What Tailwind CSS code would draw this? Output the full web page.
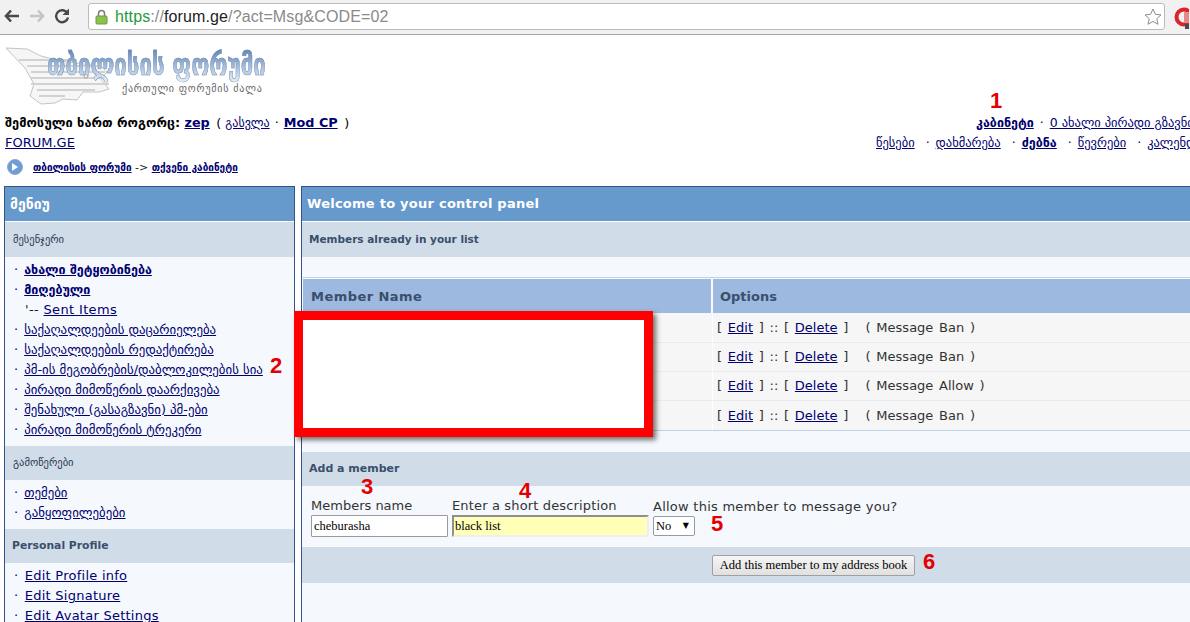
<!DOCTYPE html>
<html lang="en">
<head>
    <meta charset="UTF-8" />
    <title>forum.ge</title>
    <script src="https://cdn.jsdelivr.net/npm/@tailwindcss/browser@4"></script>
</head>
<body class="relative w-[1190px] h-[622px] overflow-hidden bg-white font-['DejaVu_Sans',sans-serif] text-[#1c1c1c]">

    <!-- Browser toolbar -->
    <div class="h-[35px] flex items-start bg-[#f1f1f1] border-b border-[#a3a3a3]">
        <div class="w-[88px] h-[34px] flex items-center gap-[9px] pl-[4px] pb-[2px] shrink-0">
            <svg width="16" height="14" viewBox="0 0 16 14"><path d="M7 1.500 2 7l5 5.500M2.500 7H15" fill="none" stroke="#4a4a4a" stroke-width="2.600"/></svg>
            <svg width="16" height="14" viewBox="0 0 16 14"><path d="M9 1.500 14 7l-5 5.500M13.500 7H1" fill="none" stroke="#c4c4c4" stroke-width="2.600"/></svg>
            <svg width="16" height="16" viewBox="0 0 16 16"><path d="M13.500 5.500A6 6 0 1 0 14 9.500" fill="none" stroke="#4a4a4a" stroke-width="2.400"/><path d="M15 0.500V7H8.500z" fill="#4a4a4a"/></svg>
        </div>
        <div class="mt-[3px] w-[1077px] h-[27px] flex items-center bg-white border border-[#bcbcbc] rounded-[3px] shrink-0">
            <svg class="ml-[6px] shrink-0" width="13" height="16" viewBox="0 0 13 16"><path d="M3.500 7V4.500a3 3 0 0 1 6 0V7" fill="none" stroke="#7b7b7b" stroke-width="1.500"/><rect x="1" y="7" width="11" height="8" rx="1" fill="#8cc152" stroke="#6b9a3a"/></svg>
            <div class="ml-[7px] font-['Liberation_Sans',sans-serif] text-[16px] tracking-[0.12px] whitespace-nowrap text-[#8a8a8a]"><span class="text-[#1e9b3c]">https</span>://<span class="text-[#222]">forum.ge</span>/?act=Msg&amp;CODE=02</div>
            <svg class="ml-auto mr-[2px]" width="18" height="18" viewBox="0 0 18 18"><path d="m9 1 2.400 5.300 5.600.6-4.200 3.800 1.200 5.600L9 13.400l-5 2.900 1.200-5.600L1 6.900l5.600-.6z" fill="#fff" stroke="#8e8e8e"/></svg>
        </div>
        <svg class="ml-[9px] mt-[6px] shrink-0" width="15" height="24" viewBox="0 0 15 24">
            <circle cx="10" cy="11" r="7.500" fill="none" stroke="#d8262c" stroke-width="4"/>
            <rect x="10" y="6" width="5" height="11" fill="#e8888a"/>
            <rect x="11" y="18" width="4" height="5" fill="#4a4a4a"/>
        </svg>
    </div>

    <!-- Logo -->
    <div class="h-[76px] pl-[5px] pt-[11px] flex">
        <svg class="shrink-0" width="118" height="64" viewBox="0 0 118 64">
            <path d="M1 2 22 3l14 7 20 5 22 3 18 2 6 6-6 7 8 10-10 3H78l-6 8-14-1-8 4-14 1-11-8 4-12L20 22z" fill="#f6f6f6" stroke="#c4c4c4"/>
            <path d="M14 14H72M22 20H96M26 26H100M26 32H96M26 38H104M32 44H90M34 50H60" stroke="#d2d2d2" stroke-width="2" fill="none"/>
            <circle cx="81" cy="30" r="2" fill="#fff" stroke="#999"/>
        </svg>
        <div class="ml-[-76px] pt-[3px] relative">
            <div class="h-[32px] origin-left scale-x-[0.74] text-[30px] leading-[32px] font-bold whitespace-nowrap text-transparent bg-clip-text bg-gradient-to-b from-[#5f84b6] to-[#e4ecf5] [-webkit-text-stroke:0.5px_#6d8bb3]">თბილისის ფორუმი</div>
            <div class="mt-[2px] ml-[75px] text-[10px] leading-[12px] tracking-[0.8px] whitespace-nowrap text-[#666]">ქართული ფორუმის ძალა</div>
        </div>
    </div>

    <!-- User bar -->
    <div class="h-[48px] pl-[5px] flex justify-between whitespace-nowrap">
        <div>
            <div class="h-[23px] pt-[3px] text-[12.8px] leading-[18px] font-bold text-black">შემოსული ხართ როგორც: <a class="text-[#000070] underline" href="#">zep</a> <span class="font-normal ml-[2px]">( <a class="text-[12px] text-[#000070] underline" href="#">გასვლა</a><span class="mx-[5px]">·</span></span><a class="text-[#000070] underline" href="#">Mod CP</a> <span class="font-normal ml-[2px]">)</span></div>
            <a class="block text-[13px] leading-[17px] text-[#000070] underline" href="#">FORUM.GE</a>
        </div>
        <div class="w-[314px] shrink-0 overflow-hidden text-[12.5px] text-[#000070]">
            <div class="h-[23px] pt-[3px] pl-[100px] leading-[18px]"><a class="font-bold underline" href="#">კაბინეტი</a> <span class="mx-[2px]">·</span> <a class="underline" href="#">0 ახალი პირადი გზავნილი</a></div>
            <div class="leading-[17px]"><a class="underline" href="#">წესები</a> <span class="ml-[7px] mr-[2px]">·</span> <a class="underline" href="#">დახმარება</a> <span class="ml-[7px] mr-[2px]">·</span> <a class="font-bold underline" href="#">ძებნა</a> <span class="ml-[7px] mr-[2px]">·</span> <a class="underline" href="#">წევრები</a> <span class="ml-[7px] mr-[2px]">·</span> <a class="underline" href="#">კალენდარი</a></div>
        </div>
    </div>

    <!-- Breadcrumb -->
    <div class="h-[27px] pl-[7px] flex items-start gap-[10px]">
        <div class="w-[16px] h-[16px] rounded-full bg-[#6f9bd8] border border-[#8fa9cc] flex items-center justify-center">
            <svg width="6" height="8" viewBox="0 0 6 8"><path d="M0 0v8l6-4z" fill="#fff"/></svg>
        </div>
        <div class="text-[10px] leading-[18px] font-bold whitespace-nowrap"><a class="text-[#000070] underline" href="#">თბილისის ფორუმი</a> <span class="text-[11px] font-normal">-&gt;</span> <a class="text-[#000070] underline" href="#">თქვენი კაბინეტი</a></div>
    </div>

    <div class="flex items-start pl-[4px] gap-[6px]">
        <!-- Left menu -->
        <aside class="w-[291px] h-[440px] shrink-0 bg-[#f5f9fd] border border-b-0 border-[#345487]">
            <div class="h-[35px] flex items-center pl-[5px] bg-[#6699cc] border-b border-white text-[14px] font-bold text-white">მენიუ</div>
            <div class="h-[35px] flex items-center pl-[8px] bg-[#d1dce9] text-[10.5px] text-[#26364d]">მესენჯერი</div>
            <ul class="pt-[3px] pb-[6px] text-[12.85px] leading-[20px] text-[#000070] whitespace-nowrap">
                <li class="pl-[9px]">· <a class="ml-[2px] text-[12.5px] font-bold underline" href="#">ახალი შეტყობინება</a></li>
                <li class="pl-[9px]">· <a class="ml-[2px] text-[12.5px] font-bold underline" href="#">მიღებული</a></li>
                <li class="pl-[20px] text-[13px] text-[#1c1c1c] tracking-[0.35px]">'-- <a class="text-[#000070] underline" href="#">Sent Items</a></li>
                <li class="pl-[9px]">· <a class="ml-[2px] underline" href="#">საქაღალდეების დაცარიელება</a></li>
                <li class="pl-[9px]">· <a class="ml-[2px] underline" href="#">საქაღალდეების რედაქტირება</a></li>
                <li class="pl-[9px]">· <a class="ml-[2px] underline" href="#">პმ-ის მეგობრების/დაბლოკილების სია</a></li>
                <li class="pl-[9px]">· <a class="ml-[2px] underline" href="#">პირადი მიმოწერის დაარქივება</a></li>
                <li class="pl-[9px]">· <a class="ml-[2px] underline" href="#">შენახული (გასაგზავნი) პმ-ები</a></li>
                <li class="pl-[9px]">· <a class="ml-[2px] underline" href="#">პირადი მიმოწერის ტრეკერი</a></li>
            </ul>
            <div class="h-[34px] flex items-center pl-[8px] bg-[#d1dce9] text-[10.5px] text-[#26364d]">გამოწერები</div>
            <ul class="pt-[3px] pb-[6px] text-[12.85px] leading-[20px] text-[#000070] whitespace-nowrap">
                <li class="pl-[9px]">· <a class="ml-[2px] underline" href="#">თემები</a></li>
                <li class="pl-[9px]">· <a class="ml-[2px] underline" href="#">განყოფილებები</a></li>
            </ul>
            <div class="h-[34px] flex items-center pl-[7px] bg-[#d1dce9] text-[10.8px] font-bold text-[#3a4f6c]">Personal Profile</div>
            <ul class="pt-[3px] text-[13px] tracking-[0.25px] leading-[20px] text-[#000070] whitespace-nowrap">
                <li class="pl-[9px]">· <a class="ml-[2px] underline" href="#">Edit Profile info</a></li>
                <li class="pl-[9px]">· <a class="ml-[2px] underline" href="#">Edit Signature</a></li>
                <li class="pl-[9px]">· <a class="ml-[2px] underline" href="#">Edit Avatar Settings</a></li>
            </ul>
        </aside>

        <!-- Control panel -->
        <main class="w-[960px] h-[440px] shrink-0 bg-[#f5f9fd] border border-b-0 border-r-0 border-[#345487]">
            <div class="h-[35px] flex items-center pl-[5px] bg-[#6699cc] border-b border-white text-[13px] tracking-[0.25px] font-bold text-white">Welcome to your control panel</div>
            <div class="h-[35px] flex items-center pl-[7px] bg-[#d1dce9] text-[10.5px] font-bold text-[#3a4f6c]">Members already in your list</div>
            <div class="h-[20px]"></div>

            <div class="ml-[1px] border-y border-[#c2d0e4] pt-[1px]">
                <div class="h-[34px] flex bg-[#9db9e0] text-[13px] font-bold text-[#3a4f6c]">
                    <div class="w-[410px] pl-[8px] pt-[1px] flex items-center border-r-2 border-[#f5f9fd] tracking-[0.45px]">Member Name</div>
                    <div class="pl-[7px] pt-[1px] flex items-center">Options</div>
                </div>
                <div class="h-[30px] flex bg-[#f5f6f5] border-b border-[#e8ecf1] text-[13px] text-[#333]">
                    <div class="w-[410px] border-r border-white"></div>
                    <div class="pl-[4px] flex items-center whitespace-pre [word-spacing:1.6px]">[ <a class="text-[#000070] underline" href="#">Edit</a> ] :: [ <a class="text-[#000070] underline" href="#">Delete</a> ]   ( Message Ban )</div>
                </div>
                <div class="h-[29px] flex bg-[#f5f6f5] border-b border-[#e8ecf1] text-[13px] text-[#333]">
                    <div class="w-[410px] border-r border-white"></div>
                    <div class="pl-[4px] flex items-center whitespace-pre [word-spacing:1.6px]">[ <a class="text-[#000070] underline" href="#">Edit</a> ] :: [ <a class="text-[#000070] underline" href="#">Delete</a> ]   ( Message Ban )</div>
                </div>
                <div class="h-[29px] flex bg-[#f5f6f5] border-b border-[#e8ecf1] text-[13px] text-[#333]">
                    <div class="w-[410px] border-r border-white"></div>
                    <div class="pl-[4px] flex items-center whitespace-pre [word-spacing:1.6px]">[ <a class="text-[#000070] underline" href="#">Edit</a> ] :: [ <a class="text-[#000070] underline" href="#">Delete</a> ]   ( Message Allow )</div>
                </div>
                <div class="h-[29px] flex bg-[#f5f6f5] text-[13px] text-[#333]">
                    <div class="w-[410px] border-r border-white"></div>
                    <div class="pl-[4px] flex items-center whitespace-pre [word-spacing:1.6px]">[ <a class="text-[#000070] underline" href="#">Edit</a> ] :: [ <a class="text-[#000070] underline" href="#">Delete</a> ]   ( Message Ban )</div>
                </div>
            </div>

            <div class="h-[21px]"></div>
            <div class="h-[34px] flex items-center pl-[7px] bg-[#d1dce9] text-[11px] font-bold text-[#3a4f6c]">Add a member</div>

            <div class="h-[61px] flex pl-[9px] text-[13px] text-[#333]">
                <div class="w-[141px] pt-[11px]">
                    <div class="h-[18px] leading-[18px]">Members name</div>
                    <input class="w-[137px] h-[22px] px-[2px] bg-white border border-[#9a9aa2] rounded-[1px] font-['Liberation_Serif',serif] text-[12.5px] text-black" value="cheburasha">
                </div>
                <div class="w-[201px] pt-[11px]">
                    <div class="h-[18px] leading-[18px] tracking-[0.15px]">Enter a short description</div>
                    <input class="w-[197px] h-[22px] px-[1px] bg-[#ffffb8] border-2 border-r-[#eeeeee] border-b-[#eeeeee] border-l-[#8f8f8f] border-t-[#8f8f8f] font-['Liberation_Serif',serif] text-[12.5px] text-black" value="black list">
                </div>
                <div class="pt-[12px]">
                    <div class="h-[18px] leading-[18px] tracking-[0.25px] whitespace-nowrap">Allow this member to message you?</div>
                    <div class="relative w-[42px] h-[20px]">
                        <select class="appearance-none w-full h-full pl-[2px] bg-white border border-[#9a9aa2] rounded-[2px] font-['Liberation_Serif',serif] text-[12.5px] text-black">
                            <option>No</option>
                        </select>
                        <span class="absolute right-[6px] top-[3px] text-[8px] leading-[14px] text-black">▼</span>
                    </div>
                </div>
            </div>

            <div class="h-[36px] flex items-center pl-[410px] bg-[#d1dce9]">
                <button class="w-[203px] h-[21px] bg-gradient-to-b from-[#f6f6f6] to-[#e0e0e0] border border-[#a0a0a0] rounded-[2px] font-['Liberation_Serif',serif] text-[12.5px] text-black">Add this member to my address book</button>
            </div>
        </main>
    </div>

    <!-- Screenshot annotations -->
    <div class="absolute left-[294px] top-[311px] w-[359px] h-[126px] bg-white border-[9px] border-[#ff0000] shadow-[3px_3px_5px_rgba(0,0,0,0.55)]"></div>
    <span class="absolute left-[990px] top-[93px] font-['Liberation_Sans',sans-serif] text-[22px] leading-[16px] font-bold text-[#e30000]">1</span>
    <span class="absolute left-[270px] top-[358px] font-['Liberation_Sans',sans-serif] text-[22px] leading-[16px] font-bold text-[#e30000]">2</span>
    <span class="absolute left-[361px] top-[479px] font-['Liberation_Sans',sans-serif] text-[22px] leading-[16px] font-bold text-[#e30000]">3</span>
    <span class="absolute left-[519px] top-[483px] font-['Liberation_Sans',sans-serif] text-[22px] leading-[16px] font-bold text-[#e30000]">4</span>
    <span class="absolute left-[711px] top-[516px] font-['Liberation_Sans',sans-serif] text-[22px] leading-[16px] font-bold text-[#e30000]">5</span>
    <span class="absolute left-[923px] top-[554px] font-['Liberation_Sans',sans-serif] text-[22px] leading-[16px] font-bold text-[#e30000]">6</span>
</body>
</html>
